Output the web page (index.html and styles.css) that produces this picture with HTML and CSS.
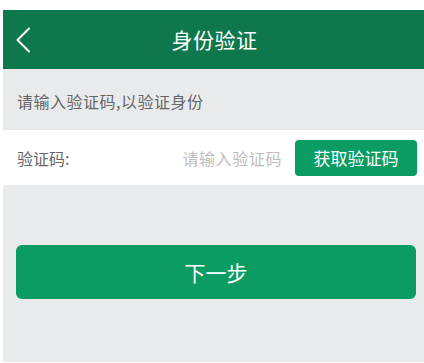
FILE: index.html
```html
<!DOCTYPE html>
<html lang="zh-CN">
<head>
<meta charset="utf-8">
<title>身份验证</title>
<link rel="stylesheet" href="styles.css">
</head>
<body>
<div class="screen">
  <header class="nav">
    <span class="back">
      <svg width="16" height="26" viewBox="0 0 16 26"><path d="M14 1.5 L2.5 13 L14 24.5" fill="none" stroke="#fff" stroke-width="2" stroke-linecap="round" stroke-linejoin="round"/></svg>
    </span>
    <h1 class="title">身份验证</h1>
  </header>
  <p class="hint">请输入验证码,以验证身份</p>
  <div class="row">
    <span class="label">验证码:</span>
    <span class="placeholder">请输入验证码</span>
    <button class="code-btn">获取验证码</button>
  </div>
  <div class="actions">
    <button class="next-btn">下一步</button>
  </div>
</div>
</body>
</html>
```
FILE: styles.css
```css
html, body {
  margin: 0;
  padding: 0;
  background: #fff;
}
body {
  font-family: "Noto Sans CJK SC", "Noto Sans", sans-serif;
  padding: 10px 0 1px 3px;
  width: 424px;
  height: 363px;
  box-sizing: border-box;
}
.screen {
  background: #e9eaec;
  height: 100%;
  display: flex;
  flex-direction: column;
}
.nav {
  height: 59px;
  background: #0e784c;
  position: relative;
  display: flex;
  align-items: center;
  justify-content: center;
}
.back {
  position: absolute;
  left: 12px;
  top: 17px;
  display: flex;
}
.title {
  margin: 0;
  color: #fff;
  font-size: 21px;
  font-weight: 400;
  line-height: 1;
  letter-spacing: 0.5px;
  padding-left: 2px;
}
.hint {
  margin: 0;
  height: 61px;
  display: flex;
  align-items: center;
  padding-left: 14px;
  padding-top: 2px;
  box-sizing: border-box;
  color: #666;
  font-size: 16px;
  letter-spacing: 0.5px;
}
.row {
  height: 55px;
  background: #fff;
  display: flex;
  align-items: center;
  padding: 0 7px 0 14px;
}
.label {
  color: #666;
  font-size: 16px;
  flex: 1;
}
.placeholder {
  color: #bdbdbd;
  font-size: 16px;
  letter-spacing: 0.6px;
  margin-right: 13px;
}
.code-btn {
  width: 122px;
  height: 36px;
  border: none;
  border-radius: 4px;
  background: #0b9c64;
  color: #fff;
  font-family: inherit;
  font-size: 17px;
  padding: 0;
}
.actions {
  padding: 60px 8px 0 13px;
}
.next-btn {
  width: 100%;
  height: 54px;
  border: none;
  border-radius: 6px;
  background: #0b9c64;
  color: #fff;
  font-family: inherit;
  font-size: 21px;
  padding: 0;
}
```
